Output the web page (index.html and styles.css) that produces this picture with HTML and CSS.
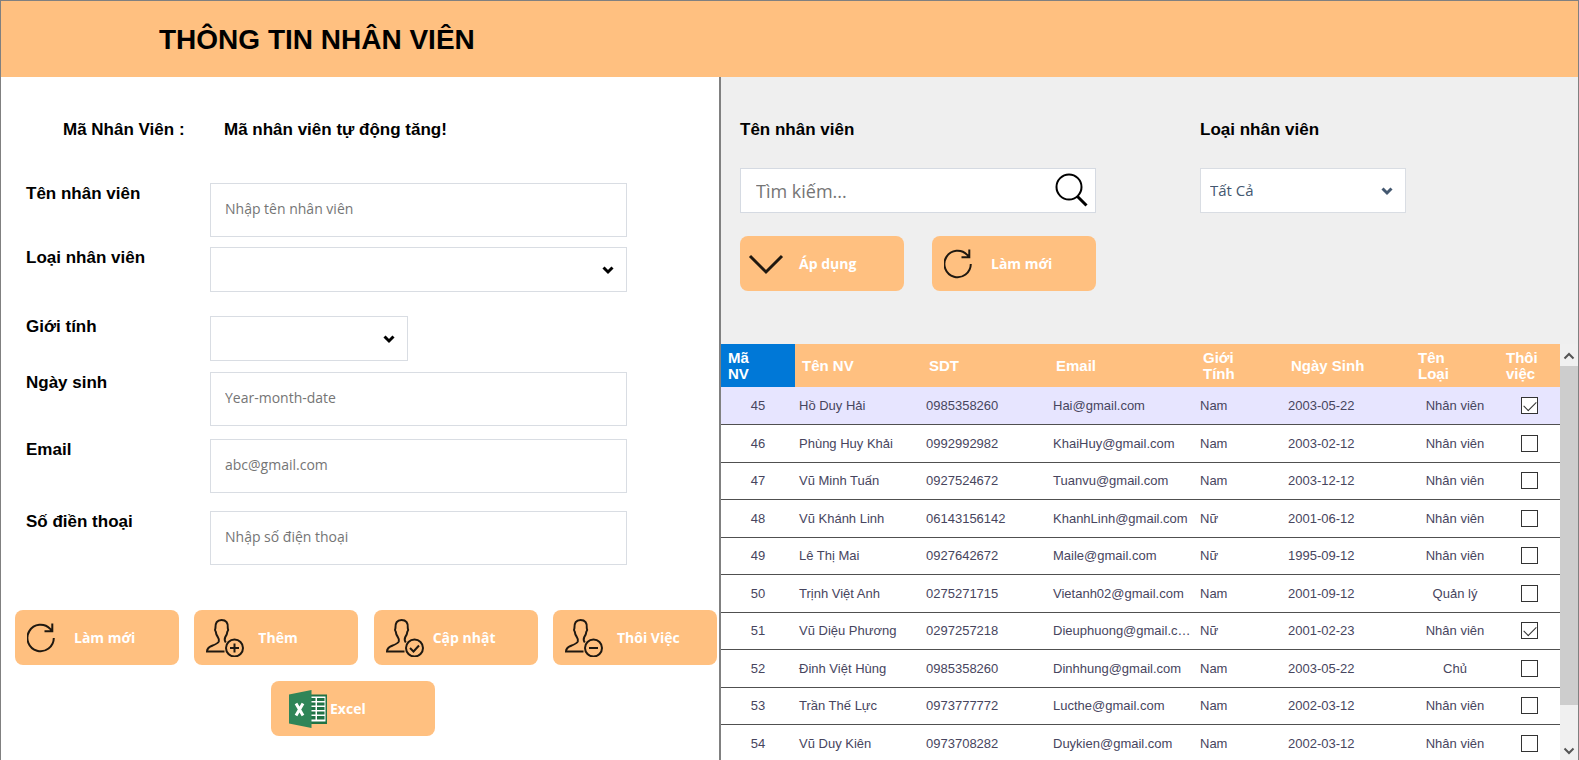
FILE: index.html
```html
<!DOCTYPE html>
<html lang="vi">
<head>
    <meta charset="UTF-8">
    <meta name="viewport" content="width=device-width, initial-scale=1.0">
    <title>Thông tin nhân viên</title>
    <link rel="stylesheet" href="styles.css">
</head>
<body>
    <!-- Shared icons -->
    <svg class="sprite" aria-hidden="true">
        <symbol id="icon-refresh" viewBox="0 0 38 38">
            <path d="M26.800 19a13.200 13.200 0 1 1-3.600-9.100l2 2.100M25.300 4.500v7.800h-7.800"/>
        </symbol>
        <symbol id="icon-user" viewBox="0 0 38 38">
            <path d="M18.500 32.500H1c0-3.500 2-4.500 4.500-5.500 3.500-1.400 6.500-2.500 7.300-4.500.5-1.600 0-3-1-4.500-1.400-1.600-1.800-3.200-2-5.100-.8-1-1-2.500-.4-3.600C9.200 3.800 11 1 15.500 1s7 2.800 6.300 8.300c.7 1.100.3 2.600-.5 3.600-.2 1.900-.6 3.500-2 5.100-.8 1.700-1 3.500.5 5.500"/>
            <circle cx="28.500" cy="29" r="8.500"/>
        </symbol>
        <symbol id="icon-chevron" viewBox="0 0 12 9">
            <path d="M1.500 1.500l4.500 4.500 4.500-4.500"/>
        </symbol>
    </svg>

    <div class="app">
        <header class="header">
            <h1>THÔNG TIN NHÂN VIÊN</h1>
        </header>

        <main class="main">
            <section class="detail">
                <div class="employee-id">
                    <span>Mã Nhân Viên :</span>
                    <span>Mã nhân viên tự động tăng!</span>
                </div>
                <form class="form" id="employee-form">
                    <div class="field">
                        <label for="name">Tên nhân viên</label>
                        <input type="text" id="name" placeholder="Nhập tên nhân viên">
                    </div>
                    <div class="field field-type">
                        <label for="type">Loại nhân viên</label>
                        <div class="select">
                            <select id="type">
                                <option value=""></option>
                                <option>Nhân viên</option>
                                <option>Quản lý</option>
                                <option>Chủ</option>
                            </select>
                            <svg class="chevron"><use href="#icon-chevron"/></svg>
                        </div>
                    </div>
                    <div class="field field-gender">
                        <label for="gender">Giới tính</label>
                        <div class="select select-short">
                            <select id="gender">
                                <option value=""></option>
                                <option>Nam</option>
                                <option>Nữ</option>
                            </select>
                            <svg class="chevron"><use href="#icon-chevron"/></svg>
                        </div>
                    </div>
                    <div class="field field-birthday">
                        <label for="birthday">Ngày sinh</label>
                        <input type="text" id="birthday" placeholder="Year-month-date">
                    </div>
                    <div class="field field-email">
                        <label for="email">Email</label>
                        <input type="email" id="email" placeholder="abc@gmail.com">
                    </div>
                    <div class="field">
                        <label for="phone">Số điền thoại</label>
                        <input type="tel" id="phone" placeholder="Nhập số điện thoại">
                    </div>
                </form>
                <div class="actions">
                    <button type="reset" form="employee-form" class="btn">
                        <svg class="icon"><use href="#icon-refresh"/></svg>
                        <span>Làm mới</span>
                    </button>
                    <button type="button" class="btn btn-wide">
                        <svg class="icon" viewBox="0 0 38 38"><use href="#icon-user"/><path d="M24 29h9M28.500 24.500v9"/></svg>
                        <span>Thêm</span>
                    </button>
                    <button type="button" class="btn">
                        <svg class="icon" viewBox="0 0 38 38"><use href="#icon-user"/><path d="M24 29l3.500 3.500 5.500-6"/></svg>
                        <span>Cập nhật</span>
                    </button>
                    <button type="button" class="btn btn-wide">
                        <svg class="icon" viewBox="0 0 38 38"><use href="#icon-user"/><path d="M24 29h9"/></svg>
                        <span>Thôi Việc</span>
                    </button>
                </div>
                <button type="button" class="btn btn-excel">
                    <svg class="excel" viewBox="0 0 38 38" aria-hidden="true">
                        <path class="excel-sheet" d="M21 4.500h17V34H21z"/>
                        <path class="excel-grid" d="M22 6.500h14.500v25H22z"/>
                        <path class="excel-sheet" d="M22 8h4.500v3H22zM28 8h7.500v3H28zM22 12.500h4.500v3H22zM28 12.500h7.500v3H28zM22 17h4.500v3H22zM28 17h7.500v3H28zM22 21.500h4.500v3H22zM28 21.500h7.500v3H28zM22 26h4.500v3.500H22zM28 26h7.500v3.500H28z"/>
                        <path class="excel-cover" d="M0 4.500L22.500 0v38L0 33.500z"/>
                        <path class="excel-mark" d="M7 13.500l7 12M14 13.500l-7 12"/>
                    </svg>
                    <span>Excel</span>
                </button>
            </section>

            <section class="list">
                <div class="filters">
                    <div class="filter filter-name">
                        <label for="search">Tên nhân viên</label>
                        <div class="search">
                            <input type="text" id="search" placeholder="Tìm kiếm...">
                            <svg viewBox="0 0 36 36" aria-hidden="true">
                                <circle cx="15" cy="14" r="12.500"/>
                                <path d="M23.500 23.500l9 9"/>
                            </svg>
                        </div>
                        <div class="filter-actions">
                            <button type="button" class="btn">
                                <svg class="icon icon-apply" viewBox="0 0 38 38"><path d="M-2 11l16 16 16-16"/></svg>
                                <span>Áp dụng</span>
                            </button>
                            <button type="button" class="btn">
                                <svg class="icon"><use href="#icon-refresh"/></svg>
                                <span>Làm mới</span>
                            </button>
                        </div>
                    </div>
                    <div class="filter filter-type">
                        <label for="filter-type">Loại nhân viên</label>
                        <div class="select">
                            <select id="filter-type">
                                <option>Tất Cả</option>
                                <option>Nhân viên</option>
                                <option>Quản lý</option>
                                <option>Chủ</option>
                            </select>
                            <svg class="chevron"><use href="#icon-chevron"/></svg>
                        </div>
                    </div>
                </div>

                <div class="table-area">
                    <div class="table-view">
                        <table>
                            <colgroup>
                                <col class="col-id">
                                <col class="col-name">
                                <col class="col-phone">
                                <col class="col-email">
                                <col class="col-gender">
                                <col class="col-birthday">
                                <col class="col-type">
                                <col class="col-off">
                            </colgroup>
                            <thead>
                                <tr>
                                    <th class="active">Mã<br>NV</th>
                                    <th>Tên NV</th>
                                    <th>SDT</th>
                                    <th>Email</th>
                                    <th>Giới<br>Tính</th>
                                    <th>Ngày Sinh</th>
                                    <th>Tên<br>Loại</th>
                                    <th>Thôi<br>việc</th>
                                </tr>
                            </thead>
                            <tbody>
                                <tr class="selected"><td>45</td><td>Hồ Duy Hải</td><td>0985358260</td><td>Hai@gmail.com</td><td>Nam</td><td>2003-05-22</td><td>Nhân viên</td><td><input type="checkbox" aria-label="Thôi việc 45" checked></td></tr>
                                <tr><td>46</td><td>Phùng Huy Khải</td><td>0992992982</td><td>KhaiHuy@gmail.com</td><td>Nam</td><td>2003-02-12</td><td>Nhân viên</td><td><input type="checkbox" aria-label="Thôi việc 46"></td></tr>
                                <tr><td>47</td><td>Vũ Minh Tuấn</td><td>0927524672</td><td>Tuanvu@gmail.com</td><td>Nam</td><td>2003-12-12</td><td>Nhân viên</td><td><input type="checkbox" aria-label="Thôi việc 47"></td></tr>
                                <tr><td>48</td><td>Vũ Khánh Linh</td><td>06143156142</td><td>KhanhLinh@gmail.com</td><td>Nữ</td><td>2001-06-12</td><td>Nhân viên</td><td><input type="checkbox" aria-label="Thôi việc 48"></td></tr>
                                <tr><td>49</td><td>Lê Thị Mai</td><td>0927642672</td><td>Maile@gmail.com</td><td>Nữ</td><td>1995-09-12</td><td>Nhân viên</td><td><input type="checkbox" aria-label="Thôi việc 49"></td></tr>
                                <tr><td>50</td><td>Trịnh Việt Anh</td><td>0275271715</td><td>Vietanh02@gmail.com</td><td>Nam</td><td>2001-09-12</td><td>Quản lý</td><td><input type="checkbox" aria-label="Thôi việc 50"></td></tr>
                                <tr><td>51</td><td>Vũ Diệu Phương</td><td>0297257218</td><td>Dieuphuong@gmail.com</td><td>Nữ</td><td>2001-02-23</td><td>Nhân viên</td><td><input type="checkbox" aria-label="Thôi việc 51" checked></td></tr>
                                <tr><td>52</td><td>Đinh Việt Hùng</td><td>0985358260</td><td>Dinhhung@gmail.com</td><td>Nam</td><td>2003-05-22</td><td>Chủ</td><td><input type="checkbox" aria-label="Thôi việc 52"></td></tr>
                                <tr><td>53</td><td>Trần Thế Lực</td><td>0973777772</td><td>Lucthe@gmail.com</td><td>Nam</td><td>2002-03-12</td><td>Nhân viên</td><td><input type="checkbox" aria-label="Thôi việc 53"></td></tr>
                                <tr><td>54</td><td>Vũ Duy Kiên</td><td>0973708282</td><td>Duykien@gmail.com</td><td>Nam</td><td>2002-03-12</td><td>Nhân viên</td><td><input type="checkbox" aria-label="Thôi việc 54"></td></tr>
                            </tbody>
                        </table>
                    </div>
                    <div class="scrollbar" aria-hidden="true">
                        <svg class="chevron scroll-up"><use href="#icon-chevron"/></svg>
                        <div class="scroll-track"><div class="scroll-thumb"></div></div>
                        <svg class="chevron scroll-down"><use href="#icon-chevron"/></svg>
                    </div>
                </div>
            </section>
        </main>
    </div>
</body>
</html>
```
FILE: styles.css
```css
* {
    box-sizing: border-box;
}
body {
    margin: 0;
    font-family: "Liberation Sans", Arial, sans-serif;
    color: #000;
    background-color: #fff;
}
input, select, button {
    font-family: "Open Sans", "Noto Sans", sans-serif;
}
.sprite {
    position: absolute;
    width: 0;
    height: 0;
}
.app {
    display: flex;
    flex-direction: column;
    height: 100vh;
    overflow: hidden;
    border: 1px solid #808080;
    border-bottom: none;
}
.header {
    flex: none;
    padding: 23px 158px 21px;
    background-color: #ffc080;
}
h1 {
    margin: 0;
    font-size: 28px;
    line-height: 32px;
    font-weight: bold;
}
.main {
    flex: 1;
    min-height: 0;
    display: grid;
    grid-template-columns: 718fr 859fr;
}

/* Employee form */
.detail {
    min-width: 0;
    background-color: #fff;
}
.employee-id {
    display: grid;
    grid-template-columns: 161px 1fr;
    padding: 42px 0 0 62px;
    font-size: 17px;
    line-height: 22px;
    font-weight: bold;
}
.form {
    padding: 42px 92px 0 25px;
}
.field {
    display: grid;
    grid-template-columns: 184px 1fr;
    align-items: start;
}
.field-type {
    margin: 10px 0 24px;
}
.field-gender {
    margin-bottom: 11px;
}
.field-email {
    margin: 13px 0 18px;
}
label {
    font-size: 17px;
    line-height: 22px;
    font-weight: bold;
}
.field input {
    width: 100%;
    height: 54px;
    padding: 0 14px 3px;
    border: 1px solid #d9dde3;
    background-color: #fff;
    font-size: 14px;
}
input::placeholder {
    color: #757575;
    opacity: 1;
}
.select {
    position: relative;
}
.select-short {
    width: 198px;
}
select {
    display: block;
    width: 100%;
    height: 45px;
    padding: 0 30px 2px 9px;
    border: 1px solid #d9dde3;
    border-radius: 0;
    background-color: #fff;
    color: #445870;
    font-size: 15px;
    appearance: none;
}
.chevron {
    width: 12px;
    height: 9px;
    fill: none;
    stroke: #000;
    stroke-width: 3;
}
.select .chevron {
    position: absolute;
    right: 13px;
    top: 19px;
    pointer-events: none;
}

/* Buttons */
.btn {
    display: flex;
    align-items: center;
    gap: 9px;
    width: 164px;
    height: 55px;
    padding: 0 12px;
    border: none;
    border-radius: 8px;
    background-color: #ffc080;
    color: #fff;
    font-size: 14px;
    font-weight: bold;
    white-space: nowrap;
    cursor: pointer;
}
.btn-wide {
    gap: 14px;
}
.icon {
    flex: none;
    width: 38px;
    height: 38px;
    overflow: visible;
    fill: none;
    stroke: #1f1810;
    stroke-width: 2;
}
.icon-apply {
    stroke-width: 3;
}
.actions {
    display: flex;
    justify-content: space-between;
    padding: 45px 2px 0 14px;
}
.btn-excel {
    gap: 3px;
    margin: 16px auto 0 270px;
    padding: 0 18px;
}
.excel {
    flex: none;
    width: 38px;
    height: 38px;
}
.excel-sheet {
    fill: #207245;
}
.excel-grid {
    fill: #fff;
}
.excel-cover {
    fill: #2f8558;
}
.excel-mark {
    fill: none;
    stroke: #fff;
    stroke-width: 3;
}

/* Search and filters */
.list {
    display: flex;
    flex-direction: column;
    min-width: 0;
    min-height: 0;
    border-left: 2px solid #808080;
    background-color: #efefef;
}
.filters {
    display: flex;
    gap: 104px;
    padding: 42px 19px 53px;
}
.filter label {
    display: block;
    margin-bottom: 27px;
}
.filter-name {
    width: 356px;
}
.filter-type {
    width: 206px;
}
.filter-type .chevron {
    stroke: #445870;
}
.search {
    display: flex;
    align-items: center;
    height: 45px;
    padding: 0 5px 0 15px;
    border: 1px solid #d5dae2;
    background-color: #fff;
}
.search input {
    flex: 1;
    min-width: 0;
    padding: 0;
    border: none;
    outline: none;
    background: none;
    font-size: 18px;
}
.search svg {
    width: 36px;
    height: 36px;
    fill: none;
    stroke: #000;
    stroke-width: 2;
}
.search path {
    stroke-width: 3;
}
.filter-actions {
    display: flex;
    justify-content: space-between;
    margin-top: 23px;
}

/* Employee table */
.table-area {
    flex: 1;
    display: flex;
    min-height: 0;
}
.table-view {
    flex: 1;
    min-width: 0;
    overflow: hidden;
    background-color: #fff;
}
table {
    width: 100%;
    table-layout: fixed;
    border-collapse: collapse;
    font-size: 13px;
    color: #47455e;
}
.col-id {
    width: 74px;
}
.col-name, .col-phone, .col-birthday {
    width: 127px;
}
.col-email {
    width: 147px;
}
.col-gender, .col-type {
    width: 88px;
}
th {
    height: 43px;
    padding: 0 7px;
    background-color: #ffc080;
    color: #fff;
    font-size: 15px;
    line-height: 16px;
    text-align: left;
}
th.active {
    background-color: #0078d7;
}
td {
    height: 37px;
    padding: 0 4px;
    border-bottom: 1px solid #505050;
    overflow: hidden;
    text-overflow: ellipsis;
    white-space: nowrap;
}
tr:nth-child(even) td {
    height: 38px;
}
.selected td {
    background-color: #e7e5ff;
}
td:first-child, td:nth-child(7), td:last-child {
    text-align: center;
}
td input {
    display: block;
    width: 17px;
    height: 17px;
    margin: 0 auto;
    border: 1px solid #333;
    background-color: #fff;
    appearance: none;
}
td input:checked::before {
    content: "";
    display: block;
    width: 11px;
    height: 6px;
    margin: 3px 0 0 2px;
    border: solid #333;
    border-width: 0 0 1px 1px;
    transform: rotate(-45deg);
}
.scrollbar {
    display: flex;
    flex-direction: column;
    align-items: center;
    width: 18px;
    padding: 7px 0 4px;
    background-color: #f0f0f0;
}
.scrollbar .chevron {
    flex: none;
    stroke: #555;
    stroke-width: 2;
}
.scroll-up {
    transform: rotate(180deg);
}
.scroll-track {
    flex: 1;
    width: 100%;
    margin: 6px 0 0;
}
.scroll-thumb {
    height: 89%;
    background-color: #cdcdcd;
}
```
